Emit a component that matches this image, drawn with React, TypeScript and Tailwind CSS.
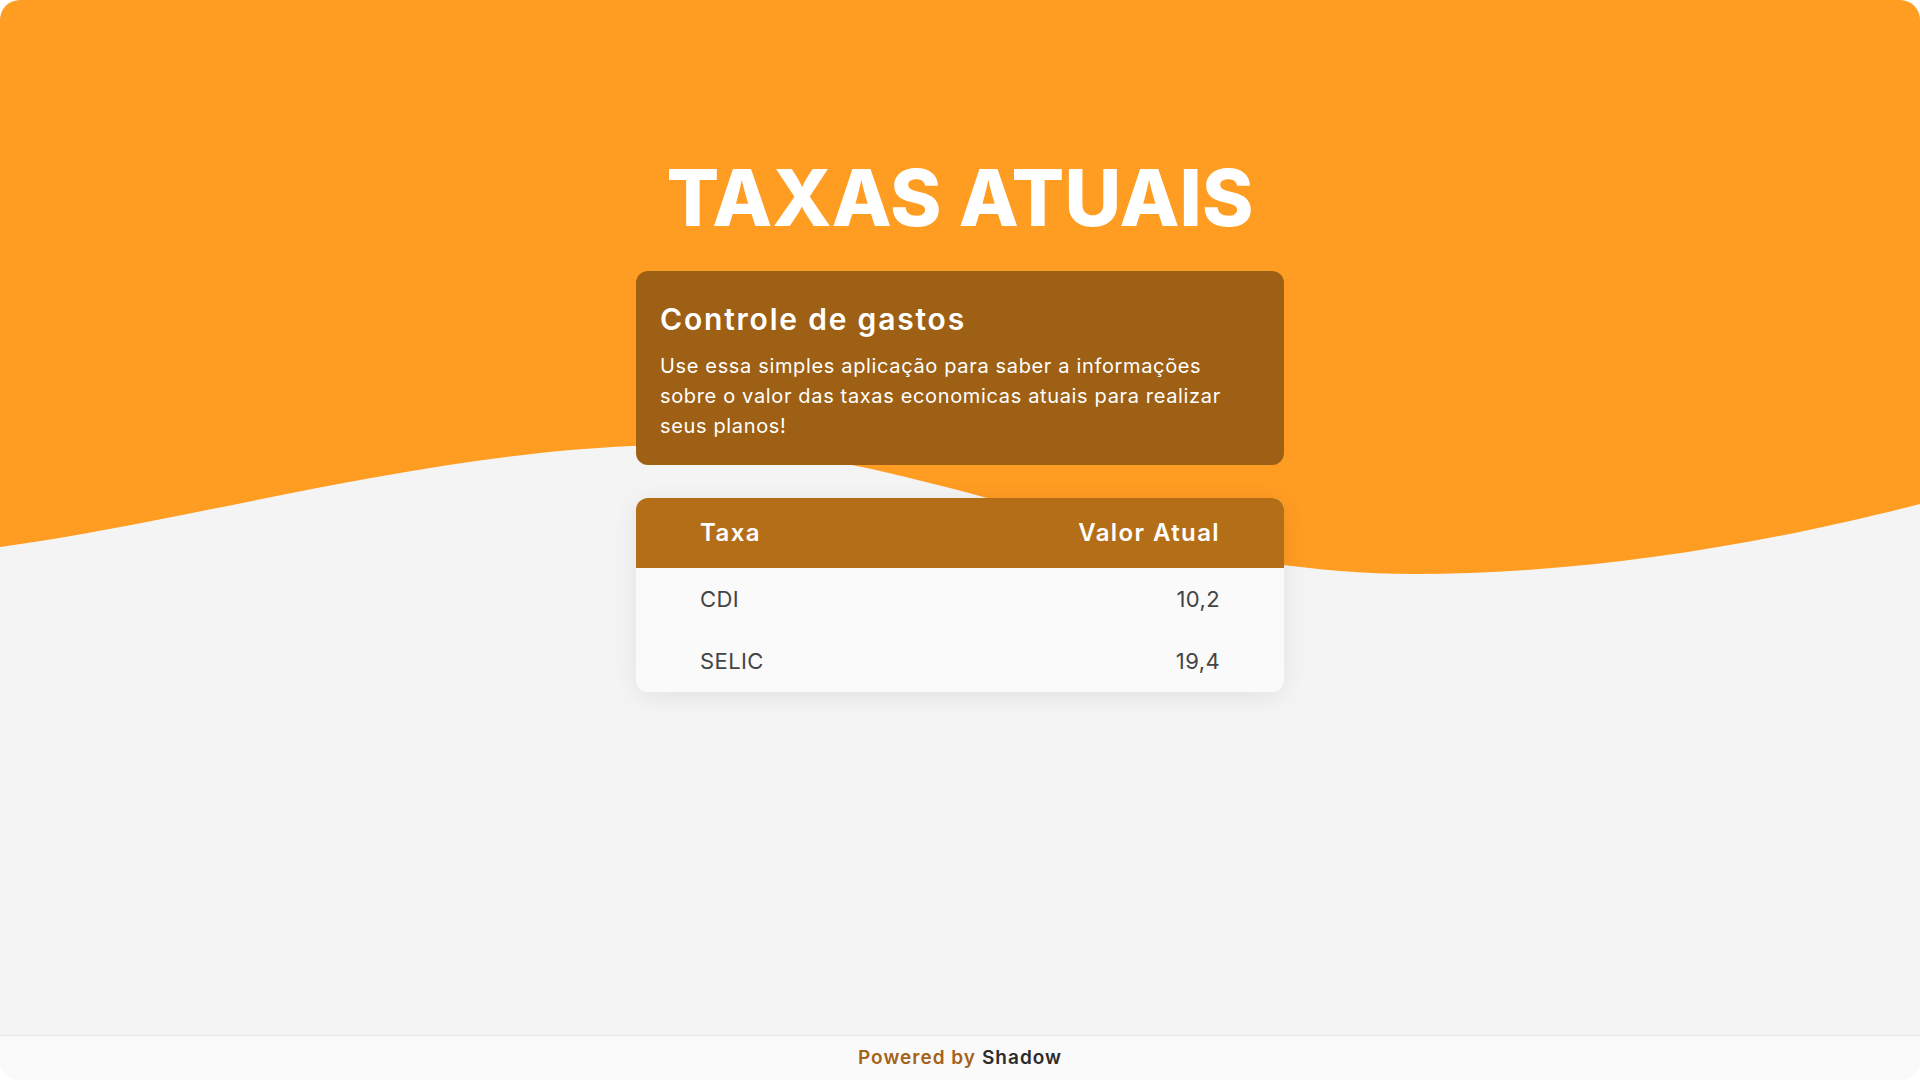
import React from "react";

const rows = [
  { taxa: "CDI", valor: "10,2" },
  { taxa: "SELIC", valor: "19,4" },
];

export default function App() {
  return (
    <div className="w-[1920px] h-[1080px] bg-white" style={{ fontFamily: "Inter, 'Open Sans', sans-serif" }}>
      <div className="relative flex h-full flex-col overflow-hidden rounded-[20px] bg-[#F4F4F4]">
        <svg
          className="pointer-events-none absolute inset-0 h-full w-full"
          viewBox="0 0 1920 1080"
          preserveAspectRatio="none"
        >
          <path
            fill="#FF9C22"
            d="M0,547 C200,520 450,445 680,445 C910,445 1140,574 1413,574 C1600,574 1780,540 1920,504 L1920,0 L0,0 Z"
          />
        </svg>

        <main className="relative z-10 flex flex-1 flex-col items-center pt-[159px]">
          <h1 className="text-[78px] font-extrabold leading-none tracking-[0px] text-white">TAXAS ATUAIS</h1>

          <section className="mt-[34px] w-[648px] rounded-[12px] bg-[#9E6014] px-6 pt-[26px] pb-[24px] text-white">
            <h2 className="mb-[10px] text-[30px] font-semibold leading-[44px] tracking-[1.8px]">Controle de gastos</h2>
            <p className="text-[20px] leading-[30px] font-normal tracking-[0.65px]">
              Use essa simples aplicação para saber a informações sobre o valor das taxas economicas atuais para
              realizar seus planos!
            </p>
          </section>

          <div className="mt-[33px] w-[648px] overflow-hidden rounded-[12px] bg-[#FAFAFA] shadow-[0_4px_24px_rgba(0,0,0,0.08)]">
            <div className="flex h-[70px] items-center justify-between bg-[#B46E17] px-16 text-[24px] font-semibold tracking-[1.4px] text-white">
              <span>Taxa</span>
              <span>Valor Atual</span>
            </div>
            {rows.map((r) => (
              <div key={r.taxa} className="flex h-[62px] items-center justify-between px-16 text-[22px] tracking-[0.4px] text-[#444444]">
                <span>{r.taxa}</span>
                <span>{r.valor}</span>
              </div>
            ))}
          </div>
        </main>

        <footer className="relative z-10 flex h-[45px] items-center justify-center border-t border-[#E6E6E6] bg-[#FAFAFA] text-[19px] font-semibold tracking-[1px]">
          <span className="text-[#A5631A]">Powered by</span>
          <span className="ml-[6px] text-[#2B2B2B]">Shadow</span>
        </footer>
      </div>
    </div>
  );
}
